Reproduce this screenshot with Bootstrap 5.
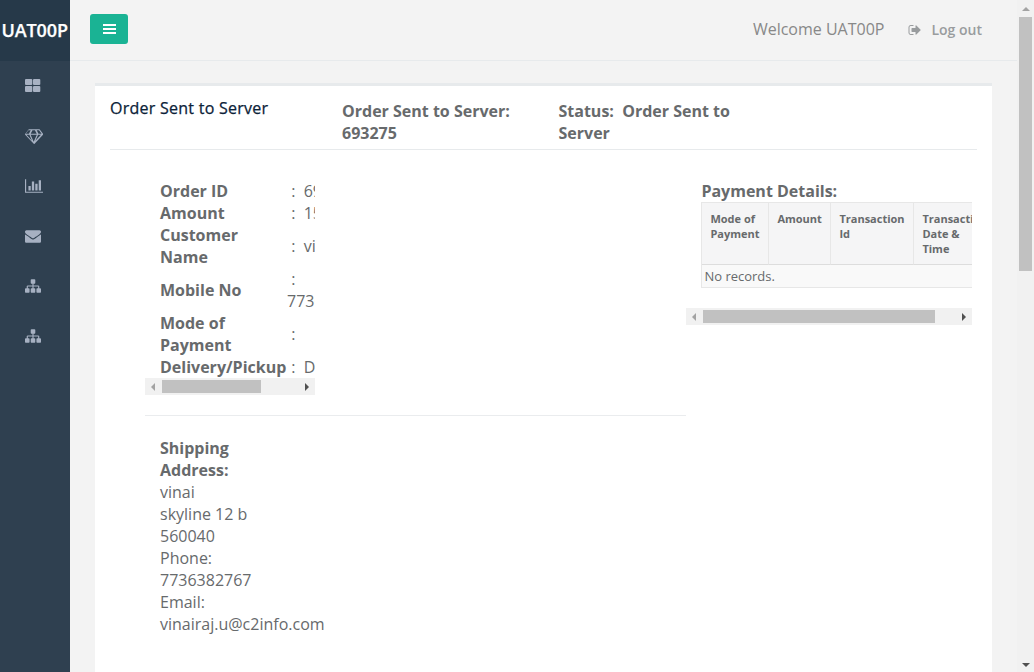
<!DOCTYPE html>
<html lang="en">
<head>
<meta charset="utf-8">
<title>Order Sent to Server</title>
<meta name="viewport" content="width=device-width, initial-scale=1">
<link href="https://cdn.jsdelivr.net/npm/bootstrap@5.3.0/dist/css/bootstrap.min.css" rel="stylesheet">
<style>
body{font-family:"Open Sans",sans-serif;font-size:16px;line-height:22px;color:#676a6c;background:#f3f3f3;height:672px}
b,th{font-weight:700}
.side{width:70px;background:#2f4050;color:#a7b1c2}
.brand{height:61px;background:#263949;color:#fff;font-size:18px;font-weight:600;letter-spacing:-.1px;-webkit-text-stroke:.25px #fff;line-height:61px;padding-left:1.400px;white-space:nowrap}
.side a{display:block;height:50px;padding:17px 0 0 25px;color:#a7b1c2;line-height:0}
svg{fill:currentColor}
.topbar{height:61px;border-bottom:1px solid #e7eaec;padding:0 35px 0 20px}
.menu-btn{width:38px;height:30px;background:#1ab394;color:#fff;border-radius:3px;margin-bottom:2px}
.welcome{color:#888;margin-right:24px;margin-bottom:2px}
.logout{color:#999c9e;font-size:14px;font-weight:600;gap:10px}
.panel{margin:22px 25px 0;background:#fff;border-top:3px solid #e7eaec;padding:0 15px}
.panel-head{height:64px;border-bottom:1px solid #e7eaec}
.head-title{width:232px;padding-top:11px;color:#0b2238;letter-spacing:.26px;-webkit-text-stroke:.25px #0b2238}
.head-id{width:216.500px;padding-top:14px}
.head-status{width:200px;padding-top:14px}
.panel-main{margin-left:35px;height:540px}
.left-part{width:541px;padding-top:30px}
.order-box{width:170px;height:198px;overflow:hidden;padding-left:15px}
.order-box table{width:240px;table-layout:fixed}
.order-box th,.order-box td{padding:0;vertical-align:middle}
.order-box td{white-space:nowrap}
.hbar{height:17px;background:#f1f1f1;padding:0 5px;color:#505050}
.hbar .thumb{height:13px;background:#c1c1c1;margin-left:6px}
.divider{height:1px;background:#eaecee;margin:20px 0 21px}
.ship{padding-left:15px;width:120px}
.pay-part{width:286px;padding-top:30px}
.pay-box{padding-left:15.400px;overflow:hidden;height:128px}
.pay-table{width:420px;table-layout:fixed;border-collapse:separate;border-spacing:0;border:1px solid #e7e7e7}
.pay-table th{background:#f5f5f6;font-size:11px;line-height:15px;padding:8px 8px 7px;height:62px;vertical-align:top;border-right:1px solid #e7e7e7;border-bottom:1px solid #ddd}
.pay-table td{background:#f9f9f9;font-size:13px;line-height:18px;padding:2px;height:22px}
.vbar{width:17px;background:#f1f1f1;padding:6px 0 4px}
.vbar .thumb{width:13px;height:254px;background:#c1c1c1;margin-top:6px}
.arrow-off{fill:#a3a3a3}
.arrow-on{fill:#505050}
</style>
</head>
<body class="d-flex overflow-hidden">
<svg class="d-none"><symbol id="sitemap" viewBox="0 0 1792 1792"><path d="M1792 1248v320q0 40-28 68t-68 28h-320q-40 0-68-28t-28-68v-320q0-40 28-68t68-28h96v-192h-512v192h96q40 0 68 28t28 68v320q0 40-28 68t-68 28h-320q-40 0-68-28t-28-68v-320q0-40 28-68t68-28h96v-192h-512v192h96q40 0 68 28t28 68v320q0 40-28 68t-68 28h-320q-40 0-68-28t-28-68v-320q0-40 28-68t68-28h96v-192q0-52 38-90t90-38h512v-192h-96q-40 0-68-28t-28-68v-320q0-40 28-68t68-28h320q40 0 68 28t28 68v320q0 40-28 68t-68 28h-96v192h512q52 0 90 38t38 90v192h96q40 0 68 28t28 68z"/></symbol></svg>

<nav class="side flex-shrink-0">
  <div class="brand">UAT00P</div>
  <a href="#"><svg width="16" height="16" viewBox="0 0 16 16"><rect y="1" width="7.300" height="6" rx="1"/><rect x="8" y="1" width="7.300" height="6" rx="1"/><rect y="8" width="7.300" height="6" rx="1"/><rect x="8" y="8" width="7.300" height="6" rx="1"/></svg></a>
  <a href="#"><svg width="18.3" height="16" viewBox="50 0 2048 1792"><path d="M212 768l623 665-300-665h-323zm812 772l349-772h-698l349 772zm-538-900l204-384h-262l-288 384h346zm727 793l623-665h-323l-300 665zm-530-793h682l-204-384h-274l-204 384zm879 0h346l-288-384h-262l204 384zm141-486l384 512q14 18 13 41.500t-17 40.500l-960 1024q-18 20-47 20t-47-20l-960-1024q-16-17-17-40.500t13-41.500l384-512q18-26 51-26h1152q33 0 51 26z"/></svg></a>
  <a href="#"><svg width="18.3" height="16" viewBox="0 0 2048 1792"><path d="M640 896v512h-256v-512h256zm384-512v1024h-256v-1024h256zm1024 1152v128h-2048v-1536h128v1408h1920zm-640-896v768h-256v-768h256zm384-384v1152h-256v-1152h256z"/></svg></a>
  <a href="#"><svg width="16" height="16" viewBox="0 0 1792 1792"><path d="M1792 710v794q0 66-47 113t-113 47h-1472q-66 0-113-47t-47-113v-794q44 49 101 87 362 246 497 345 57 42 92.500 65.500t94.500 48 110 24.500h2q51 0 110-24.500t94.500-48 92.500-65.500q170-123 498-345 57-39 100-87zm0-294q0 79-49 151t-122 123q-376 261-468 325-10 7-42.500 31t-54 38.500-52 32.500-57.500 27-50 9h-2q-23 0-50-9t-57.500-27-52-32.500-54-38.500-42.500-31q-91-64-262-182.500t-205-142.500q-62-42-117-115.500t-55-136.500q0-78 41.500-130t118.500-52h1472q65 0 112.500 47t47.500 113z"/></svg></a>
  <a href="#"><svg width="16" height="16"><use href="#sitemap"/></svg></a>
  <a href="#"><svg width="16" height="16"><use href="#sitemap"/></svg></a>
</nav>

<main class="flex-grow-1">
  <header class="topbar d-flex align-items-center">
    <button class="menu-btn border-0 p-0 d-flex align-items-center justify-content-center"><svg width="13" height="10" viewBox="0 0 13 10"><path d="M0 0h13v2H0zM0 4h13v2H0zM0 8h13v2H0z"/></svg></button>
    <span class="welcome ms-auto">Welcome UAT00P</span>
    <a href="#" class="logout d-flex align-items-center text-decoration-none"><svg width="13" height="14" viewBox="0 0 1664 1792"><path d="M704 1440q0 4 1 20t.5 26.500-3 23.500-10 19.500-20.500 6.500h-320q-119 0-203.500-84.500t-84.500-203.500v-704q0-119 84.500-203.500t203.500-84.500h320q13 0 22.500 9.500t9.500 22.500q0 4 1 20t.5 26.500-3 23.500-10 19.500-20.500 6.500h-320q-66 0-113 47t-47 113v704q0 66 47 113t113 47h312l11.500 1 11.500 3 8 5.500 7 9 2 13.500zm928-544q0 26-19 45l-544 544q-19 19-45 19t-45-19-19-45v-288h-448q-26 0-45-19t-19-45v-384q0-26 19-45t45-19h448v-288q0-26 19-45t45-19 45 19l544 544q19 19 19 45z"/></svg>Log out</a>
  </header>

  <section class="panel">
    <div class="panel-head d-flex">
      <div class="head-title">Order Sent to Server</div>
      <div class="head-id"><b>Order Sent to Server:<br>693275</b></div>
      <div class="head-status"><b>Status:&nbsp; Order Sent to Server</b></div>
    </div>
    <div class="panel-main d-flex">
      <div class="left-part flex-shrink-0">
        <div class="order-box">
          <table>
            <colgroup><col style="width:127px"><col></colgroup>
            <tr><th>Order ID</th><td>&nbsp;:&nbsp;&nbsp;693275</td></tr>
            <tr><th>Amount</th><td>&nbsp;:&nbsp;&nbsp;15</td></tr>
            <tr><th>Customer<br>Name</th><td>&nbsp;:&nbsp;&nbsp;vinai</td></tr>
            <tr><th>Mobile No</th><td>&nbsp;:<br>7736382767</td></tr>
            <tr><th>Mode of<br>Payment</th><td>&nbsp;:</td></tr>
            <tr><th>Delivery/Pickup</th><td>&nbsp;:&nbsp;&nbsp;Delivery</td></tr>
          </table>
        </div>
        <div class="hbar d-flex align-items-center" style="width:170px">
          <svg class="arrow-off" width="6" height="8" viewBox="0 0 6 8"><path d="M5 0v8L1 4z"/></svg>
          <div class="thumb" style="width:99px"></div>
          <svg class="arrow-on ms-auto" width="6" height="8" viewBox="0 0 6 8"><path d="M1 0v8l4-4z"/></svg>
        </div>
        <div class="divider"></div>
        <div class="ship"><b>Shipping Address:</b><br>vinai<br>skyline 12 b<br>560040<br>Phone:<br>7736382767<br>Email:<br>vinairaj.u@c2info.com</div>
      </div>
      <div class="pay-part flex-shrink-0">
        <div class="pay-box">
          <b>Payment Details:</b>
          <table class="pay-table">
            <colgroup><col style="width:67px"><col style="width:62px"><col style="width:83px"><col style="width:85px"><col></colgroup>
            <tr><th>Mode of Payment</th><th>Amount</th><th>Transaction Id</th><th>Transaction Date &amp;<br>Time</th><th></th></tr>
            <tr><td colspan="5">No records.</td></tr>
          </table>
        </div>
        <div class="hbar d-flex align-items-center">
          <svg class="arrow-off" width="6" height="8" viewBox="0 0 6 8"><path d="M5 0v8L1 4z"/></svg>
          <div class="thumb" style="width:232px"></div>
          <svg class="arrow-on ms-auto" width="6" height="8" viewBox="0 0 6 8"><path d="M1 0v8l4-4z"/></svg>
        </div>
      </div>
    </div>
  </section>
</main>

<div class="vbar d-flex flex-column align-items-center flex-shrink-0">
  <svg class="arrow-off" width="8" height="5" viewBox="0 0 8 5"><path d="M0 5h8L4 1z"/></svg>
  <div class="thumb"></div>
  <svg class="arrow-on mt-auto" width="8" height="5" viewBox="0 0 8 5"><path d="M0 0h8L4 4z"/></svg>
</div>
<script src="https://cdn.jsdelivr.net/npm/bootstrap@5.3.0/dist/js/bootstrap.bundle.min.js"></script>
</body>
</html>
